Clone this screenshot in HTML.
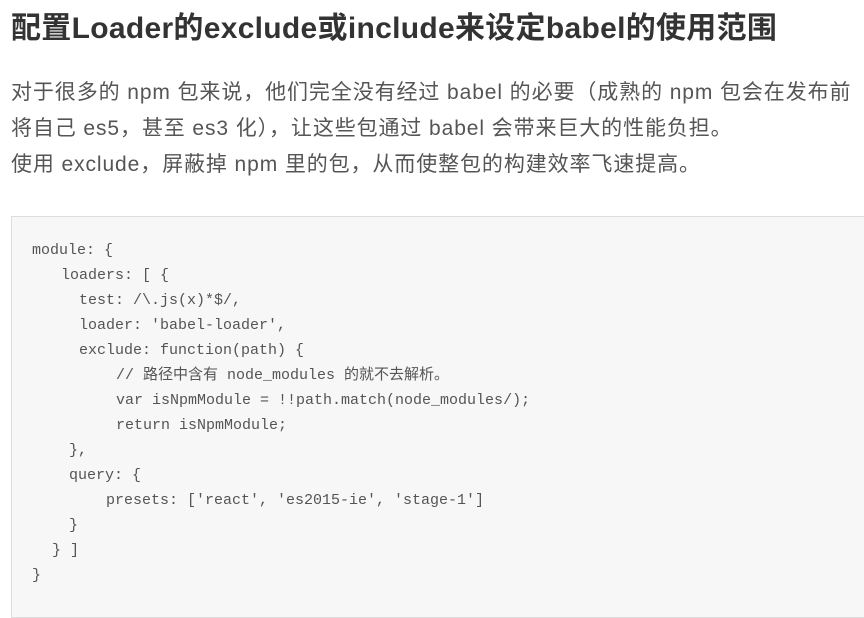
<!DOCTYPE html>
<html><head><meta charset="utf-8"><style>
body{margin:0;width:864px;height:595px;overflow:hidden;background:#fff;position:relative;font-family:"Liberation Sans","Noto Sans CJK SC",sans-serif}
h1{position:absolute;left:11px;top:3px;margin:0;font-size:30px;font-weight:bold;color:#333;white-space:nowrap;letter-spacing:0.3px}
.p{position:absolute;left:11px;font-size:21px;color:#555;white-space:nowrap;letter-spacing:0.9px}
.box{position:absolute;left:11px;top:216px;width:870px;height:400px;background:#f7f7f7;border:1px solid #ddd}
.c{position:absolute;font-family:"Liberation Mono","Noto Sans CJK SC",monospace;font-size:15px;color:#555;white-space:pre;line-height:18px}
</style></head><body>
<h1>配置Loader的exclude或include来设定babel的使用范围</h1>
<div class="p" style="top:76px">对于很多的 npm 包来说，他们完全没有经过 babel 的必要（成熟的 npm 包会在发布前</div>
<div class="p" style="top:112px">将自己 es5，甚至 es3 化），让这些包通过 babel 会带来巨大的性能负担。</div>
<div class="p" style="top:148px">使用 exclude，屏蔽掉 npm 里的包，从而使整包的构建效率飞速提高。</div>
<div class="box"></div>
<div class="c" style="left:32px;top:242px">module: {</div>
<div class="c" style="left:61px;top:267px">loaders: [ {</div>
<div class="c" style="left:79px;top:292px">test: /\.js(x)*$/,</div>
<div class="c" style="left:79px;top:317px">loader: 'babel-loader',</div>
<div class="c" style="left:79px;top:342px">exclude: function(path) {</div>
<div class="c" style="left:116px;top:367px">// 路径中含有 node_modules 的就不去解析。</div>
<div class="c" style="left:116px;top:392px">var isNpmModule = !!path.match(node_modules/);</div>
<div class="c" style="left:116px;top:417px">return isNpmModule;</div>
<div class="c" style="left:69px;top:442px">},</div>
<div class="c" style="left:69px;top:467px">query: {</div>
<div class="c" style="left:106px;top:492px">presets: ['react', 'es2015-ie', 'stage-1']</div>
<div class="c" style="left:69px;top:517px">}</div>
<div class="c" style="left:52px;top:542px">} ]</div>
<div class="c" style="left:32px;top:567px">}</div>
</body></html>
